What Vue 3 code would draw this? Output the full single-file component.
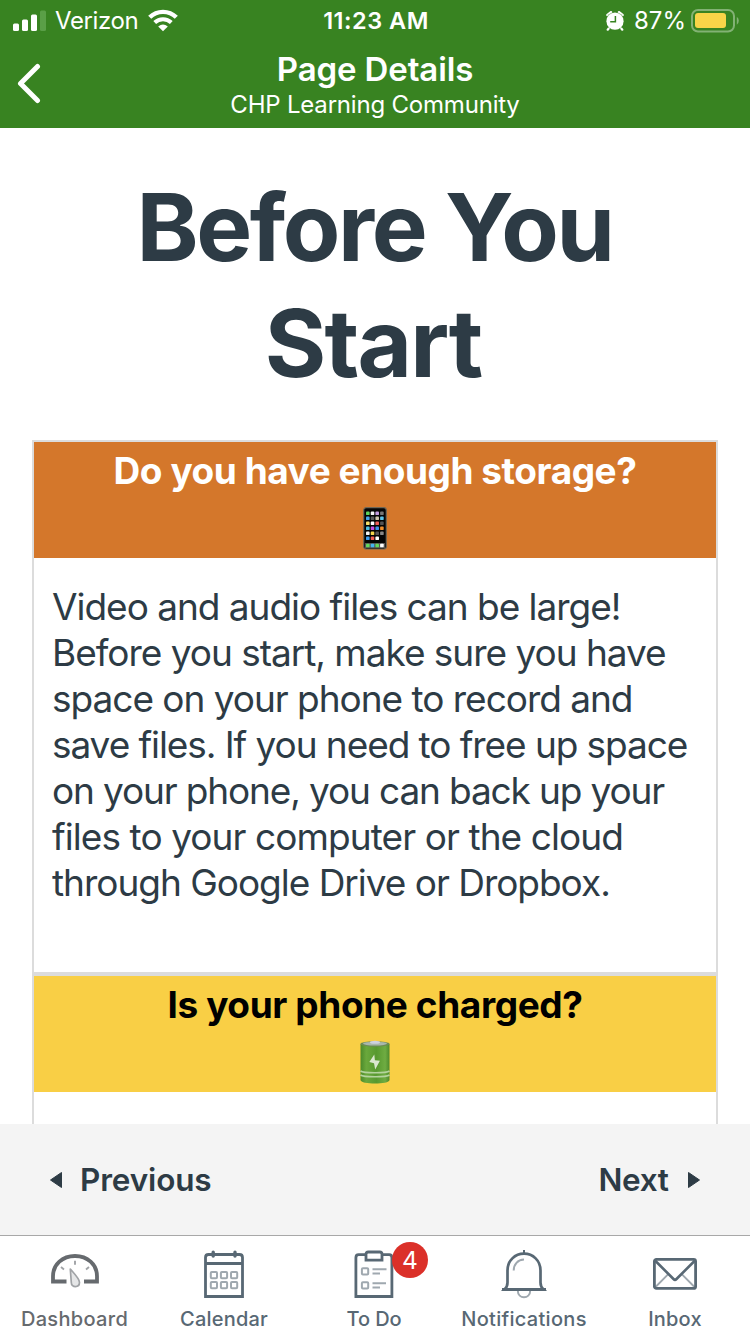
<script setup>
const bodyLines = [
  'Video and audio files can be large!',
  'Before you start, make sure you have',
  'space on your phone to record and',
  'save files. If you need to free up space',
  'on your phone, you can back up your',
  'files to your computer or the cloud',
  'through Google Drive or Dropbox.'
]
const appRows = [
  ['#5fd35b', '#f4f4f4', '#c39be0', '#777'],
  ['#45a4ea', '#5a5a5a', '#cfc6ad', '#5cc4e8'],
  ['#f6e06a', '#fff', '#ee5c56', '#555'],
  ['#4dbfe0', '#c44be0', '#3f93ee', '#ef8d2b'],
  ['#f4f4f4', '#f2d34c', '#555', '#888'],
  ['#3b9df0', '#ee5b50', '#fff']
]
const dock = ['#63d95c', '#43b5f2', '#63d95c', '#fff']
</script>

<template>
  <div class="screen">
    <header class="top">
      <div class="status">
        <div class="carrier">
          <svg class="signal" width="34" height="22" viewBox="0 0 34 22">
            <rect x="0" y="13.500" width="6" height="7.500" rx="1.500" fill="#fff" />
            <rect x="9" y="9.500" width="6" height="11.500" rx="1.500" fill="#fff" />
            <rect x="18" y="4.500" width="6" height="16.500" rx="1.500" fill="#fff" />
            <rect x="27" y="0.500" width="6" height="20.500" rx="1.500" fill="#5a9f47" />
          </svg>
          <span class="verizon">Verizon</span>
          <svg class="wifi" width="30" height="23" viewBox="0 0 30 23">
            <g fill="none" stroke="#fff">
              <path d="M1.700 8.300a19 19 0 0 1 26.600 0" stroke-width="4.400" />
              <path d="M6.700 13.500a12 12 0 0 1 16.600 0" stroke-width="4" />
            </g>
            <path d="M10.200 17.400q4.800-3.800 9.600 0L15 22.300z" fill="#fff" />
          </svg>
        </div>
        <span class="clock">11:23 AM</span>
        <div class="power">
          <svg class="alarm" width="18" height="20" viewBox="0 0 18 20">
            <path d="M1.500 4 5 1.300M16.500 4 13 1.300" stroke="#fff" stroke-width="2.600" stroke-linecap="round" />
            <path d="M3.500 16.500 1.700 18.700M14.500 16.500 16.300 18.700" stroke="#fff" stroke-width="2.200" stroke-linecap="round" />
            <circle cx="9" cy="10.200" r="9.300" fill="#388321" fill-opacity=".6" />
            <circle cx="9" cy="10.200" r="8.600" fill="#fff" />
            <path d="M9.400 5v5.800H4.200" fill="none" stroke="#388321" stroke-width="1.500" />
          </svg>
          <span class="percent">87%</span>
          <svg width="48" height="24" viewBox="0 0 48 24">
            <rect x="1" y="1" width="42" height="21.500" rx="6" fill="none" stroke="#82b274" stroke-width="2" />
            <rect x="4" y="4" width="31" height="15" rx="3" fill="#f8d548" />
            <path d="M45.800 7.800q2 1.300 2 4T45.800 15.700z" fill="#82b274" />
          </svg>
        </div>
      </div>
      <div class="nav">
        <svg class="back" width="26" height="42" viewBox="0 0 26 42">
          <path d="M21.500 3.500 4.500 20.500l17 17" fill="none" stroke="#fff" stroke-width="5" stroke-linecap="round" stroke-linejoin="round" />
        </svg>
        <div class="titles">
          <div class="page-title">Page Details</div>
          <div class="course">CHP Learning Community</div>
        </div>
      </div>
    </header>

    <main class="content">
      <h1><span>Before You</span><span class="second">Start</span></h1>
      <section class="card">
        <div class="band orange">
          <h2 class="storage">Do you have enough storage?</h2>
          <svg class="emoji" width="30" height="44" viewBox="0 0 30 44">
            <rect x="3.700" y="1.700" width="22.600" height="41.300" rx="2.500" fill="#050505" stroke="#6e6656" stroke-width="1.200" />
            <g v-for="(row, r) in appRows" :key="r">
              <rect v-for="(c, i) in row" :key="i" :x="6 + i * 4.700" :y="5.500 + r * 5" width="3.600" height="3.600" rx=".9" :fill="c" />
            </g>
            <rect x="5" y="37" width="20" height="5" fill="#555" />
            <rect v-for="(c, i) in dock" :key="i" :x="6 + i * 4.700" y="37.700" width="3.600" height="3.600" rx=".9" :fill="c" />
          </svg>
        </div>
        <p class="text"><span v-for="line in bodyLines" :key="line">{{ line }}</span></p>
      </section>
      <section class="card">
        <div class="band yellow">
          <h2>Is your phone charged?</h2>
          <svg class="emoji" width="30" height="44" viewBox="0 0 30 44">
            <defs>
              <linearGradient id="cell">
                <stop offset="0" stop-color="#4c8a2a" />
                <stop offset=".2" stop-color="#6aa83c" />
                <stop offset=".55" stop-color="#58992f" />
                <stop offset=".85" stop-color="#6fac42" />
                <stop offset="1" stop-color="#4d8a2c" />
              </linearGradient>
            </defs>
            <path d="M.5 4v36c0 4.700 29 4.700 29 0V4z" fill="url(#cell)" />
            <ellipse cx="15" cy="4" rx="14.500" ry="2.700" fill="#6c8b55" />
            <ellipse cx="15" cy="3.600" rx="12" ry="1.900" fill="#a9b7ad" />
            <ellipse cx="15" cy="2.300" rx="5" ry="1.500" fill="#ced2e0" />
            <path d="M.5 31c3 2.300 26 2.300 29 0M.5 35c3 2.300 26 2.300 29 0" fill="none" stroke="#b5d39e" stroke-width="1.700" />
            <path d="M14.300 14.500 9.300 22l4.700 1.300 1.200 6.200 4.700-8.700-5-.6z" fill="#dbe7cf" />
          </svg>
        </div>
      </section>
    </main>

    <div class="pager">
      <div class="page-link">
        <svg width="14" height="18" viewBox="0 0 14 18"><path d="M1.500 9 12.500 1.500v15z" fill="#2d3b45" stroke="#2d3b45" stroke-linejoin="round" /></svg>
        <span class="previous">Previous</span>
      </div>
      <div class="page-link">
        <span class="next">Next</span>
        <svg width="14" height="18" viewBox="0 0 14 18"><path d="M12.500 9 1.500 1.500v15z" fill="#2d3b45" stroke="#2d3b45" stroke-linejoin="round" /></svg>
      </div>
    </div>

    <nav class="tabs">
      <div class="tab active">
        <svg width="50" height="50" viewBox="0 0 50 50" fill="none">
          <path d="M16.500 31.500H3v-5.300C3 14.500 12.500 6 25 6S47 14.500 47 26.200v5.300H34" stroke="#666a6e" stroke-width="3.800" />
          <path d="M25 10.800v4M11 17l3 2.400M39 17l-3 2.400" stroke="#a0a3a6" stroke-width="1.900" />
          <path d="M20.300 19c3 3.500 9.200 9.700 9.200 13.200 0 5.800-8.200 5.800-8.200.2z" fill="#e5e6e7" stroke="#a0a3a6" stroke-width="1.700" stroke-linejoin="round" />
        </svg>
        <span class="dashboard">Dashboard</span>
      </div>
      <div class="tab">
        <svg width="50" height="50" viewBox="0 0 50 50" fill="none">
          <path d="M6.500 46.500V7.500q0-3 3-3h31q3 0 3 3v39zM6.500 13.500h37" stroke="#586874" stroke-width="2.800" />
          <path d="M14.200 2.300v3.800M36 2.300v3.800" stroke="#586874" stroke-width="3.400" stroke-linecap="round" />
          <g stroke="#9fa8af" stroke-width="2">
            <rect x="11.800" y="22" width="6.200" height="6.200" rx="1" /><rect x="21.900" y="22" width="6.200" height="6.200" rx="1" /><rect x="32" y="22" width="6.200" height="6.200" rx="1" />
            <rect x="11.800" y="32" width="6.200" height="6.200" rx="1" /><rect x="21.900" y="32" width="6.200" height="6.200" rx="1" /><rect x="32" y="32" width="6.200" height="6.200" rx="1" />
          </g>
        </svg>
        <span class="calendar">Calendar</span>
      </div>
      <div class="tab">
        <svg width="50" height="50" viewBox="0 0 50 50" fill="none">
          <path d="M16.500 4.700H9.600q-2.700 0-2.700 3v38.800h36V7.700q0-3-2.700-3h-6.700" stroke="#586874" stroke-width="2.800" />
          <path d="M17 10.200V4.200q0-2.200 2.200-2.200h11.600q2.200 0 2.200 2.200v6z" stroke="#586874" stroke-width="2.800" />
          <g stroke="#9fa8af" stroke-width="2">
            <rect x="12.900" y="18.300" width="6.300" height="6.300" rx="1" /><rect x="12.900" y="32.300" width="6.300" height="6.300" rx="1" />
            <path d="M23.500 19.200h14M23.500 23.400h7.500M23.500 33.200h13.500M23.500 37.400h7.500" />
          </g>
        </svg>
        <span class="todo">To Do</span>
        <span class="badge">4</span>
      </div>
      <div class="tab">
        <svg width="50" height="50" viewBox="0 0 50 50" fill="none">
          <path d="M18.800 40.500c0 9 12.400 9 12.400 0" stroke="#9fa8af" stroke-width="2" />
          <path d="M14.700 20.500c0-6 4-10.800 10.300-11" stroke="#9fa8af" stroke-width="2" />
          <path d="M25 0v4" stroke="#586874" stroke-width="2" />
          <path d="M5.500 39.500h39q-3-2.500-3-7V20.500C41.500 10.500 34 3.700 25 3.700S8.500 10.500 8.500 20.500v12q0 4.500-3 7z" stroke="#586874" stroke-width="2.700" />
          <path d="M3 39.500h44" stroke="#586874" stroke-width="3" />
        </svg>
        <span class="notifications">Notifications</span>
      </div>
      <div class="tab">
        <svg width="50" height="50" viewBox="0 0 50 50" fill="none">
          <path d="m5.500 37 13-13.200M44.500 37l-13-13.200" stroke="#9fa8af" stroke-width="1.900" />
          <rect x="4.400" y="9.400" width="41.200" height="29" rx="2" stroke="#586874" stroke-width="2.800" />
          <path d="m5 10.500 18.500 18.500q1.500 1.500 3 0L45 10.500" stroke="#586874" stroke-width="2.600" />
        </svg>
        <span class="inbox">Inbox</span>
      </div>
    </nav>
  </div>
</template>

<style scoped>
.screen { width: 750px; height: 1334px; display: flex; flex-direction: column; overflow: hidden; background: #fff; color: #2d3b45; font-family: Inter, "Liberation Sans", sans-serif; }
svg { display: block; flex: none; }
.top { height: 128px; flex: none; background: #388321; color: #fff; }
.status { height: 40px; display: grid; grid-template-columns: 1fr auto 1fr; align-items: center; padding: 0 11px 0 13px; font-size: 24px; line-height: 40px; }
.status span { padding-top: 1px; }
.carrier { display: flex; align-items: center; }
.signal { margin-right: 8px; }
.verizon { letter-spacing: -.4px; }
.wifi { margin-left: 9.500px; }
.clock { font-weight: 600; font-size: 23.500px; letter-spacing: .5px; }
.power { display: flex; align-items: center; justify-content: flex-end; }
.percent { margin: 0 5px 0 10.500px; letter-spacing: 0; }
.nav { height: 88px; display: grid; grid-template-columns: 60px 1fr 60px; align-items: start; }
.back { margin: 23px 0 0 16px; }
.titles { text-align: center; padding-top: 9px; }
.page-title { font-size: 33px; line-height: 40px; font-weight: 600; letter-spacing: -.12px; }
.course { font-size: 24px; line-height: 31px; letter-spacing: -.2px; }
.content { flex: 1; min-height: 0; overflow: hidden; padding: 41px 32px 0; }
h1 { margin: 0 0 39px; padding-right: 1px; font-size: 94px; line-height: 116px; font-weight: 700; letter-spacing: -2.4px; text-align: center; }
h1 span { display: block; }
h1 .second { letter-spacing: -1.8px; padding-right: 3px; }
.card { height: 530px; border: 2px solid #dcdcdc; }
.band { height: 110px; padding-top: 6px; text-align: center; }
.orange { background: #d4772b; color: #fff; }
.yellow { background: #f9cf45; color: #000; }
h2 { margin: 0; font-size: 37px; line-height: 46px; font-weight: 700; letter-spacing: -.4px; }
.storage { letter-spacing: -.46px; }
.emoji { margin: 12px auto 0; }
.text { margin: 0; padding: 26px 18px 0; font-size: 37px; line-height: 46px; letter-spacing: -1.02px; white-space: nowrap; }
.text span { display: block; }
.text span:nth-child(4) { letter-spacing: -1.07px; }
.text span:nth-child(5) { letter-spacing: -1.14px; }
.text span:nth-child(6) { letter-spacing: -.92px; }
.pager { height: 111px; flex: none; display: flex; align-items: center; justify-content: space-between; padding: 0 49px; background: #f4f4f4; font-size: 31.5px; font-weight: 600; }
.page-link { display: flex; align-items: center; }
.previous { margin-left: 17px; letter-spacing: -.15px; }
.next { margin-right: 18.500px; letter-spacing: -.35px; }
.tabs { height: 98px; flex: none; box-sizing: content-box; border-top: 1px solid #a8a8a8; display: grid; grid-template-columns: repeat(5, 150px); background: #fff; color: #586874; font-size: 20px; font-weight: 500; }
.tab { position: relative; display: flex; flex-direction: column; align-items: center; padding: 14px 2px 0 0; }
.tab:first-child, .tab:last-child { padding-right: 0; }
.tab > span { line-height: 24px; margin-top: 7px; }
.active { color: #666a6e; }
.dashboard { letter-spacing: .32px; margin-right: 1px; }
.calendar { letter-spacing: .2px; }
.todo { letter-spacing: -.1px; }
.notifications { letter-spacing: .3px; }
.inbox { letter-spacing: .2px; }
.tab > .badge { position: absolute; left: 92px; top: 6px; width: 36px; height: 36px; margin: 0; border-radius: 50%; background: #db3029; color: #fff; font-size: 24.500px; line-height: 36px; font-weight: 400; text-align: center; }
</style>
